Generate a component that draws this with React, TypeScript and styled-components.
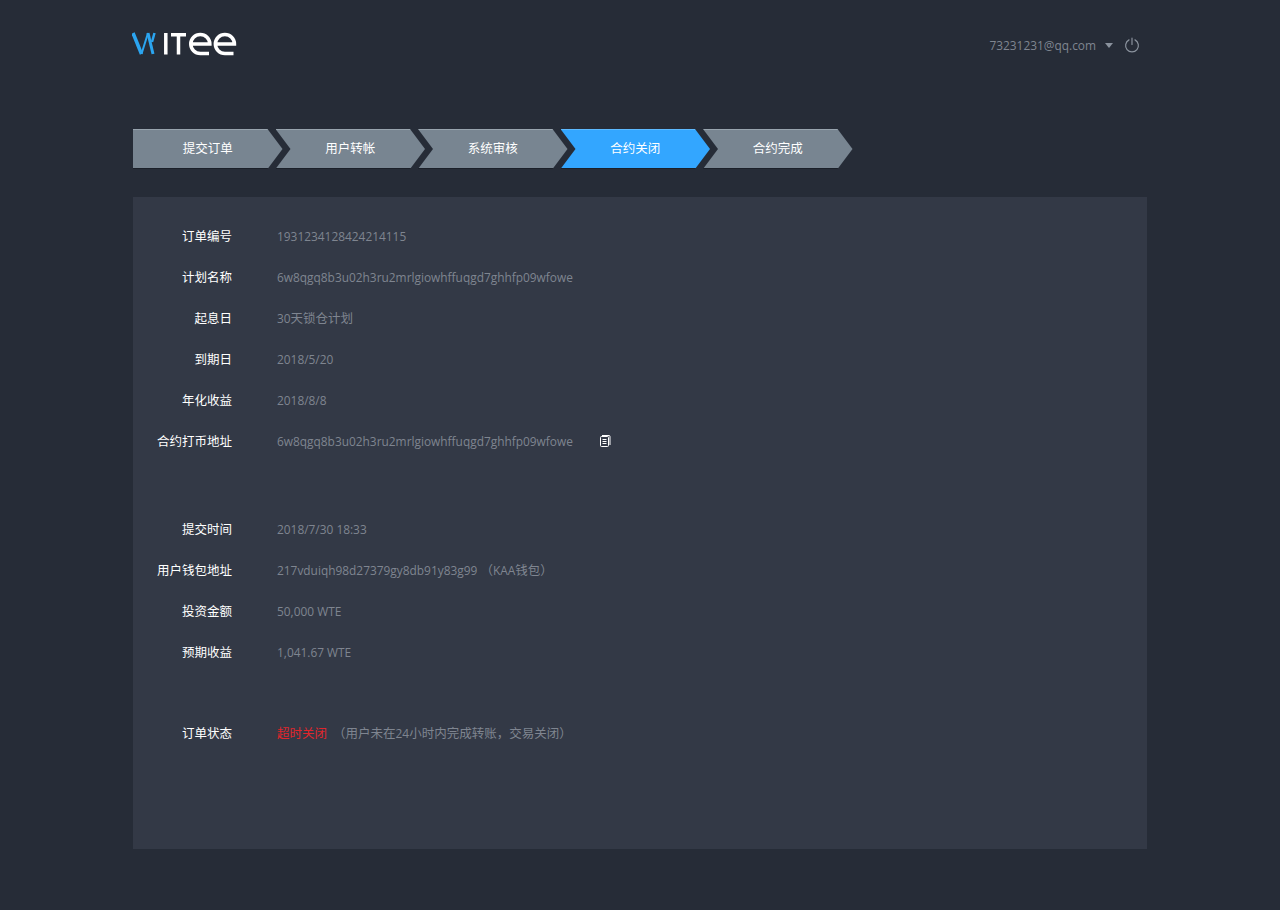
import React from "react";
import styled, { createGlobalStyle } from "styled-components";

const Global = createGlobalStyle`
  html, body { margin: 0; padding: 0; background: #262c37; }
  body { font-family: "Noto Sans CJK SC", sans-serif; font-size: 12.5px; }
`;

const latin = `"Open Sans", "Noto Sans CJK SC", sans-serif`;

const Page = styled.div`
  width: 1014px;
  height: 910px;
  margin-left: 133px;
  box-sizing: border-box;
`;

const Header = styled.header`
  height: 129px;
  display: flex;
  align-items: flex-start;
  justify-content: space-between;
`;

const Logo = styled.svg`
  width: 106px;
  height: 26px;
  margin: 30px 0 0 -1px;
`;

const Account = styled.div`
  display: flex;
  align-items: center;
  margin: 37px 7px 0 0;
  height: 16px;
  color: #7f8590;
  font-family: ${latin};
  font-size: 11.9px;
`;

const Caret = styled.span`
  width: 0;
  height: 0;
  margin: 1px 11px 0 9px;
  border-left: 4.5px solid transparent;
  border-right: 4.5px solid transparent;
  border-top: 5px solid #8a929d;
`;

const Steps = styled.ol`
  display: flex;
  margin: 0 0 28px;
  padding: 0;
  list-style: none;
`;

const Step = styled.li<{ $active?: boolean; $first?: boolean }>`
  width: 149.5px;
  height: 40px;
  margin-right: -7px;
  display: flex;
  align-items: center;
  justify-content: center;
  color: #fff;
  padding-bottom: 3px;
  box-sizing: border-box;
  background: ${(p) =>
    p.$active
      ? "linear-gradient(#5dbaff 0 1px, #33a6ff 1px 39px, #1b2029 39px)"
      : "linear-gradient(#98a4ae 0 1px, #788591 1px 39px, #1b2029 39px)"};
  clip-path: ${(p) =>
    p.$first
      ? "polygon(0 0, calc(100% - 15px) 0, 100% 50%, calc(100% - 15px) 100%, 0 100%)"
      : "polygon(0 0, calc(100% - 15px) 0, 100% 50%, calc(100% - 15px) 100%, 0 100%, 15px 50%)"};
`;

const Panel = styled.main`
  height: 652px;
  box-sizing: border-box;
  padding-top: 18px;
  background: #333946;
`;

const Group = styled.dl<{ $gap?: number }>`
  margin: 0 0 ${(p) => p.$gap ?? 0}px;
`;

const Row = styled.div`
  display: flex;
  align-items: center;
  height: 41px;
`;

const Label = styled.dt`
  width: 99px;
  text-align: right;
  color: #fff;
`;

const Value = styled.dd`
  margin: 0 0 0 45px;
  color: #7f8590;
  white-space: nowrap;
  font-family: ${latin};
  font-size: 11.9px;
`;

const Han = styled.span`
  font-size: 12.5px;
`;

const Alert = styled(Han)`
  color: #e0262c;
  margin-right: 6px;
`;

const CopyIcon = styled.svg`
  width: 12px;
  height: 12px;
  margin-left: 26px;
`;

const first: [string, React.ReactNode][] = [
  ["订单编号", "1931234128424214115"],
  ["计划名称", "6w8qgq8b3u02h3ru2mrlgiowhffuqgd7ghhfp09wfowe"],
  ["起息日", <>30<Han>天锁仓计划</Han></>],
  ["到期日", "2018/5/20"],
  ["年化收益", "2018/8/8"],
];

const second: [string, React.ReactNode][] = [
  ["提交时间", "2018/7/30 18:33"],
  ["用户钱包地址", <>217vduiqh98d27379gy8db91y83g99 <Han>（</Han>KAA<Han>钱包）</Han></>],
  ["投资金额", "50,000 WTE"],
  ["预期收益", "1,041.67 WTE"],
];

const steps = ["提交订单", "用户转帐", "系统审核", "合约关闭", "合约完成"];

export default function App() {
  return (
    <Page>
      <Global />
      <Header>
        <Logo viewBox="0 0 106 26" aria-label="WITee">
          <g fill="none">
            <path d="M1 3 L9.5 24" stroke="#2ba5f0" strokeWidth="3.5" />
            <path d="M9.5 24 L16 3" stroke="#2ba5f0" strokeWidth="2" />
            <path d="M16 3 L21 24" stroke="#2ba5f0" strokeWidth="3" />
            <path d="M22.5 3 L20 12" stroke="#2ba5f0" strokeWidth="2.5" />
            <path d="M33.8 3 V24.5" stroke="#fff" strokeWidth="3.5" />
            <path d="M39 4.7 H54 M46.5 3 V24.5" stroke="#fff" strokeWidth="3.5" />
            <path d="M59 14 H77.8 A9.5 9.5 0 1 0 68.3 23.5 H77" stroke="#fff" strokeWidth="3.6" />
            <path d="M84 14 H102.4 A9.5 9.5 0 1 0 92.9 23.5 H101.5" stroke="#fff" strokeWidth="3.6" />
          </g>
        </Logo>
        <Account>
          73231231@qq.com
          <Caret />
          <svg width="16" height="16" viewBox="0 0 16 16" fill="none" stroke="#8a929d" strokeWidth="1.2" strokeLinecap="round">
            <path d="M5 2.9 A6.4 6.4 0 1 0 11 2.9" />
            <path d="M8 1 V7.5" />
          </svg>
        </Account>
      </Header>
      <Steps>
        {steps.map((s, i) => (
          <Step key={s} $first={i === 0} $active={i === 3}>
            {s}
          </Step>
        ))}
      </Steps>
      <Panel>
        <Group $gap={47}>
          {first.map(([l, v]) => (
            <Row key={l}>
              <Label>{l}</Label>
              <Value>{v}</Value>
            </Row>
          ))}
          <Row>
            <Label>合约打币地址</Label>
            <Value>6w8qgq8b3u02h3ru2mrlgiowhffuqgd7ghhfp09wfowe</Value>
            <CopyIcon viewBox="0 0 12 12" fill="none" stroke="#fff" strokeWidth="1">
              <rect x="1.5" y="1.5" width="8" height="10" rx="1" />
              <path d="M3 .5 H10 Q11 .5 11 1.5 V10 M3.5 4.5 H7.5 M3.5 6.5 H7.5 M3.5 8.5 H7.5" />
            </CopyIcon>
          </Row>
        </Group>
        <Group $gap={40}>
          {second.map(([l, v]) => (
            <Row key={l}>
              <Label>{l}</Label>
              <Value>{v}</Value>
            </Row>
          ))}
        </Group>
        <Group>
          <Row>
            <Label>订单状态</Label>
            <Value>
              <Alert>超时关闭</Alert>
              <Han>（用户未在</Han>24<Han>小时内完成转账，交易关闭）</Han>
            </Value>
          </Row>
        </Group>
      </Panel>
    </Page>
  );
}
